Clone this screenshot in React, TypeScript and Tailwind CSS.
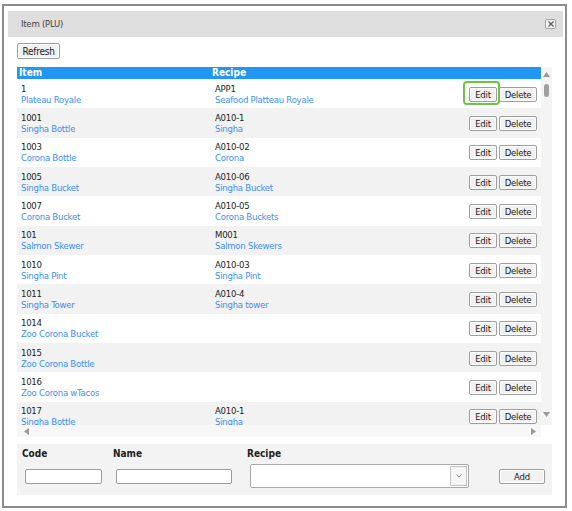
import React from "react";

const rows: [string, string, string, string][] = [
  ["1", "Plateau Royale", "APP1", "Seafood Platteau Royale"],
  ["1001", "Singha Bottle", "A010-1", "Singha"],
  ["1003", "Corona Bottle", "A010-02", "Corona"],
  ["1005", "Singha Bucket", "A010-06", "Singha Bucket"],
  ["1007", "Corona Bucket", "A010-05", "Corona Buckets"],
  ["101", "Salmon Skewer", "M001", "Salmon Skewers"],
  ["1010", "Singha Pint", "A010-03", "Singha Pint"],
  ["1011", "Singha Tower", "A010-4", "Singha tower"],
  ["1014", "Zoo Corona Bucket", "", ""],
  ["1015", "Zoo Corona Bottle", "", ""],
  ["1016", "Zoo Corona wTacos", "", ""],
  ["1017", "Singha Bottle", "A010-1", "Singha"],
];

const btn =
  "h-[15px] border border-[#9e9e9e] rounded-[2px] bg-[#f1f1f1] shadow-[inset_0_0_0_1px_#ffffff] text-[9.5px] leading-[13px] text-[#222] flex items-center justify-center";

export default function App() {
  return (
    <div className="w-[572px] h-[511px] bg-white font-['DejaVu_Sans_Condensed','DejaVu_Sans',sans-serif] text-[9.5px] tracking-[-0.25px] text-[#222] pt-[4px] pl-[2px]">
      <div className="w-[565px] h-[504px] border-2 border-[#8c8c8c] bg-white pt-[5px] pl-[4px] pr-[2px] flex flex-col">
        {/* title bar */}
        <div className="h-[26px] bg-[#dedede] flex items-center justify-between pl-[13px] pr-[7px]">
          <span className="text-[9.5px] text-[#444]">Item (PLU)</span>
          <div className="w-[11px] h-[10px] border border-[#a3a3a3] rounded-[2px] bg-[#f3f3f3] flex items-center justify-center">
            <svg width="6" height="6" viewBox="0 0 6 6">
              <path d="M0.5 0.5 L5.5 5.5 M5.5 0.5 L0.5 5.5" stroke="#555" strokeWidth="1.1" />
            </svg>
          </div>
        </div>

        <div className="pl-[9px] flex flex-col">
          <button className={btn + " w-[43px] h-[16px] mt-[6px] text-[10px]"}>Refresh</button>

          {/* table */}
          <div className="mt-[8px] w-[535px] h-[370px] grid grid-cols-[524px_11px] grid-rows-[358px_12px]">
            <div className="overflow-hidden">
              <div className="h-[12px] bg-[#2196f3] grid grid-cols-[193px_1fr] text-white font-bold text-[10px] tracking-normal leading-[12px]">
                <span className="pl-[2px]">Item</span>
                <span className="pl-[2px]">Recipe</span>
              </div>
              {rows.map((r, i) => (
                <div
                  key={i}
                  className={
                    "h-[29.33px] shrink-0 grid grid-cols-[193px_1fr_auto] items-center " +
                    (i % 2 === 1 ? "bg-[#f2f2f2]" : "bg-white")
                  }
                >
                  <div className="pl-[4px] leading-[11px] flex flex-col">
                    <span className="text-[#222]">{r[0]}</span>
                    <span className="text-[#3d8fee]">{r[1]}</span>
                  </div>
                  <div className="pl-[5px] leading-[11px] flex flex-col">
                    <span className="text-[#222]">{r[2]}</span>
                    <span className="text-[#3d8fee]">{r[3]}</span>
                  </div>
                  <div className="flex items-center gap-[2px] pr-[4px] mt-[1px]">
                    <div className="relative">
                      {i === 0 && (
                        <span className="absolute -left-[6px] -top-[6px] -right-[3px] -bottom-[3px] border-2 border-[#6cc644] rounded-[4px]" />
                      )}
                      <button className={btn + " w-[28px]"}>Edit</button>
                    </div>
                    <button className={btn + " w-[38px]"}>Delete</button>
                  </div>
                </div>
              ))}
            </div>
            {/* vertical scrollbar */}
            <div className="bg-[#f4f4f4] flex flex-col items-center justify-between pt-[5px] pb-[8px]">
              <div className="flex flex-col items-center">
                <svg width="7" height="5" viewBox="0 0 7 5">
                  <path d="M3.5 0 L7 5 L0 5 Z" fill="#9a9a9a" />
                </svg>
                <div className="mt-[7px] w-[5px] h-[13px] rounded-full bg-[#a0a0a0]" />
              </div>
              <svg width="7" height="5" viewBox="0 0 7 5">
                <path d="M0 0 L7 0 L3.5 5 Z" fill="#9a9a9a" />
              </svg>
            </div>
            {/* horizontal scrollbar */}
            <div className="bg-[#f7f7f7] flex items-center justify-between pl-[7px] pr-[5px]">
              <svg width="5" height="7" viewBox="0 0 5 7">
                <path d="M5 0 L5 7 L0 3.5 Z" fill="#9a9a9a" />
              </svg>
              <svg width="5" height="7" viewBox="0 0 5 7">
                <path d="M0 0 L0 7 L5 3.5 Z" fill="#9a9a9a" />
              </svg>
            </div>
            <div className="bg-white" />
          </div>

          {/* form panel */}
          <div className="mt-[7px] w-[535px] h-[51px] bg-[#f3f3f3] pl-[5px] pt-[4px] grid grid-cols-[91px_134px_252px_1fr] grid-rows-[12px_1fr]">
            <span className="font-bold text-[10px] tracking-normal leading-[12px]">Code</span>
            <span className="font-bold text-[10px] tracking-normal leading-[12px]">Name</span>
            <span className="font-bold text-[10px] tracking-normal leading-[12px]">Recipe</span>
            <span />
            <div className="flex items-center mt-[4px] h-[24px]">
              <div className="ml-[3px] w-[77px] h-[15px] border border-[#9c9c9c] rounded-[2px] bg-white" />
            </div>
            <div className="flex items-center mt-[4px] h-[24px]">
              <div className="ml-[3px] w-[116px] h-[15px] border border-[#9c9c9c] rounded-[2px] bg-white" />
            </div>
            <div className="flex items-center mt-[4px] h-[24px]">
              <div className="ml-[3px] w-[219px] h-[24px] border border-[#a9a9a9] rounded-[2px] bg-white flex items-center justify-end pr-[1px]">
                <div className="w-[17px] h-[20px] border border-[#c3c3c3] bg-[#f6f6f6] flex items-center justify-center">
                  <svg width="6" height="4" viewBox="0 0 6 4">
                    <path d="M0.5 0.5 L3 3 L5.5 0.5" stroke="#888" strokeWidth="1" fill="none" />
                  </svg>
                </div>
              </div>
            </div>
            <div className="flex items-center mt-[4px] h-[24px]">
              <button className={btn + " w-[46px]"}>Add</button>
            </div>
          </div>
        </div>
      </div>
    </div>
  );
}
